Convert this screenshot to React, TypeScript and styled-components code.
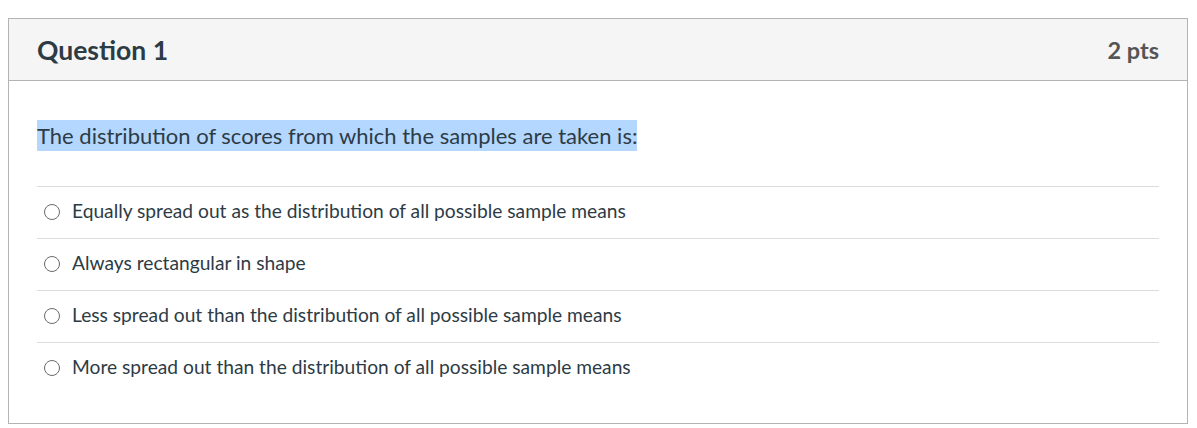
import styled, { createGlobalStyle } from 'styled-components'

const GlobalStyle = createGlobalStyle`
  html, body {
    margin: 0;
    padding: 0;
    background: #ffffff;
    font-family: Lato, "Open Sans", "Liberation Sans", sans-serif;
  }
`

const Page = styled.div`
  padding: 18px 9px 0 8px;
`

const Card = styled.div`
  border: 1px solid #b3b3b3;
  height: 406px;
  box-sizing: border-box;
  display: flex;
  flex-direction: column;
`

const Header = styled.div`
  height: 62px;
  box-sizing: border-box;
  background: #f5f5f5;
  border-bottom: 1px solid #b3b3b3;
  display: flex;
  align-items: center;
  justify-content: space-between;
  padding: 0 28px 0 28px;
`

const Title = styled.h2`
  margin: 0;
  font-size: 26.5px;
  font-weight: 700;
  color: #2d3b45;
`

const Points = styled.span`
  font-size: 23.5px;
  font-weight: 700;
  color: #555555;
`

const Body = styled.div`
  padding: 39px 28px 0 28px;
`

const Prompt = styled.p`
  margin: 0 0 34px 0;
  font-size: 22px;
  line-height: 32px;
  color: #2d3b45;
`

const Highlight = styled.span`
  background: #b3d7ff;
  padding: 2px 0;
`

const Answers = styled.div`
  display: flex;
  flex-direction: column;
`

const Answer = styled.label`
  height: 52px;
  box-sizing: border-box;
  border-top: 1px solid #dcdcdc;
  display: flex;
  align-items: center;
  padding: 0 0 4px 7px;
  gap: 12px;
  font-size: 19.2px;
  color: #2d3b45;
`

const Radio = styled.span`
  width: 14px;
  height: 14px;
  margin-top: 2px;
  border: 1px solid #6b6b6b;
  border-radius: 50%;
  background: #fff;
  flex-shrink: 0;
`

const answers = [
  'Equally spread out as the distribution of all possible sample means',
  'Always rectangular in shape',
  'Less spread out than the distribution of all possible sample means',
  'More spread out than the distribution of all possible sample means',
]

export default function App() {
  return (
    <>
      <GlobalStyle />
      <Page>
        <Card>
          <Header>
            <Title>Question 1</Title>
            <Points>2 pts</Points>
          </Header>
          <Body>
            <Prompt>
              <Highlight>The distribution of scores from which the samples are taken is:</Highlight>
            </Prompt>
            <Answers>
              {answers.map((a) => (
                <Answer key={a}>
                  <Radio />
                  {a}
                </Answer>
              ))}
            </Answers>
          </Body>
        </Card>
      </Page>
    </>
  )
}
